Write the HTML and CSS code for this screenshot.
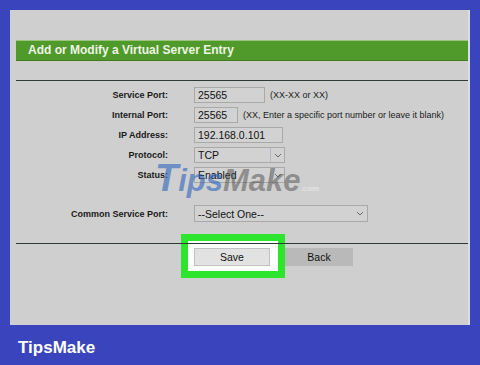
FILE: index.html
```html
<!DOCTYPE html>
<html lang="en">

<head>
    <meta charset="UTF-8">
    <meta name="viewport" content="width=device-width, initial-scale=1.0">
    <title>Virtual Server Entry</title>
    <link rel="stylesheet" href="styles.css">
</head>

<body>
    <div class="page">
        <div class="panel">
            <div class="panel-title">Add or Modify a Virtual Server Entry</div>
            <div class="form">
                <div class="row">
                    <span class="label">Service Port:</span>
                    <span class="field w-service">25565</span>
                    <span class="hint">(XX-XX or XX)</span>
                </div>
                <div class="row">
                    <span class="label">Internal Port:</span>
                    <span class="field w-internal">25565</span>
                    <span class="hint">(XX, Enter a specific port number or leave it blank)</span>
                </div>
                <div class="row">
                    <span class="label">IP Address:</span>
                    <span class="field w-ip">192.168.0.101</span>
                </div>
                <div class="row">
                    <span class="label">Protocol:</span>
                    <span class="field select w-select">
                        <span>TCP</span>
                        <span class="arrow"><svg width="8" height="5" viewBox="0 0 8 5"><polyline points="1,1 4,4 7,1" fill="none" stroke="#6a6a6a" stroke-width="1"/></svg></span>
                    </span>
                </div>
                <div class="row">
                    <span class="label">Status:</span>
                    <span class="field select w-select">
                        <span>Enabled</span>
                        <span class="arrow"><svg width="8" height="5" viewBox="0 0 8 5"><polyline points="1,1 4,4 7,1" fill="none" stroke="#6a6a6a" stroke-width="1"/></svg></span>
                    </span>
                </div>
                <div class="row row-common">
                    <span class="label">Common Service Port:</span>
                    <span class="field select w-common">
                        <span>--Select One--</span>
                        <span class="arrow plain"><svg width="8" height="5" viewBox="0 0 8 5"><polyline points="1,1 4,4 7,1" fill="none" stroke="#6a6a6a" stroke-width="1"/></svg></span>
                    </span>
                </div>

                <div class="watermark"><span class="wm-tips"><span class="wm-t">T</span>ips</span><span class="wm-make">Make</span><span class="wm-com">.com</span></div>
            </div>
            <div class="actions">
                <div class="highlight">
                    <button class="btn btn-save">Save</button>
                </div>
                <button class="btn btn-back">Back</button>
            </div>
        </div>
        <div class="footer">TipsMake</div>
    </div>
</body>

</html>
```

FILE: styles.css
```css
body {
    margin: 0;
    background: #3a45bd;
    font-family: "Liberation Sans", Arial, sans-serif;
}

.page {
    padding: 10px 10px 0;
}

.panel {
    height: 315px;
    box-sizing: border-box;
    background: #cfcfcf;
    padding-top: 30px;
    padding-left: 6px;
    border-right: 2px solid #dcdce8;
}

.panel-title {
    height: 21px;
    box-sizing: border-box;
    background: #4f9a2a;
    border-top: 1px solid #9cc47f;
    border-bottom: 1px solid #3e7c22;
    color: #eef4e6;
    font-size: 12px;
    font-weight: bold;
    line-height: 19px;
    padding-left: 12px;
}

.form {
    position: relative;
    margin-top: 19px;
    border-top: 1px solid #2e3b35;
    border-bottom: 1px solid #2e3b35;
    padding-top: 6px;
    padding-bottom: 21px;
}

.row {
    display: flex;
    align-items: center;
    height: 16px;
    margin-bottom: 4px;
}

.row-common {
    margin-top: 22px;
    height: 17px;
    margin-bottom: 0;
}

.label {
    width: 152px;
    margin-right: 26px;
    text-align: right;
    font-size: 9px;
    font-weight: bold;
    color: #1a1a1a;
}

.field {
    height: 100%;
    box-sizing: border-box;
    border: 1px solid #a9a9a9;
    background: #d2d2d2;
    font-size: 10.5px;
    color: #111;
    padding: 0 3px;
    display: flex;
    align-items: center;
}

.w-service {
    width: 71px;
}

.w-internal {
    width: 44px;
}

.w-ip {
    width: 89px;
}

.w-select {
    width: 91px;
}

.w-common {
    width: 174px;
}

.select {
    justify-content: space-between;
    padding-right: 0;
}

.arrow {
    width: 14px;
    height: 100%;
    box-sizing: border-box;
    border-left: 1px solid #b4b8c8;
    display: flex;
    align-items: center;
    justify-content: center;
}

.arrow.plain {
    border-left: none;
}

.hint {
    margin-left: 5px;
    font-size: 9px;
    color: #1a1a1a;
}

.watermark {
    position: absolute;
    left: 139px;
    top: 78px;
    font-size: 31px;
    font-weight: bold;
    font-style: italic;
    line-height: 1;
    pointer-events: none;
    white-space: nowrap;
}

.wm-tips {
    color: rgba(45, 100, 190, 0.6);
}

.wm-t {
    font-size: 38px;
}

.wm-make {
    color: rgba(85, 85, 85, 0.55);
}

.wm-com {
    font-size: 8px;
    font-style: normal;
    color: rgba(255, 255, 255, 0.45);
}

.actions {
    display: flex;
    align-items: flex-start;
    padding-left: 165px;
}

.highlight {
    margin-top: -10px;
    border: 7px solid #2de52d;
    background: #fbfdfb;
    padding: 7px 8px 5px 6px;
}

.btn {
    display: block;
    height: 18px;
    border: none;
    font-family: "Liberation Sans", Arial, sans-serif;
    font-size: 10.5px;
    color: #111;
    padding: 0;
}

.btn-save {
    width: 76px;
    background: #e2e2e2;
    border: 1px solid #c2c2c2;
}

.btn-back {
    width: 68px;
    margin-top: 4px;
    background: #b9b9b9;
}

.footer {
    padding: 13px 8px 0;
    color: #fff;
    font-size: 17px;
    font-weight: bold;
    line-height: 20px;
}
```
